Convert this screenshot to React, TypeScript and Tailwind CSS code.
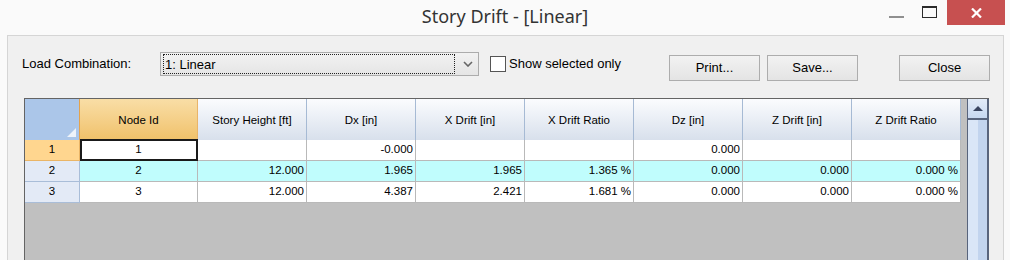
import React from "react";

const cols = [
  "Node Id",
  "Story Height [ft]",
  "Dx [in]",
  "X Drift [in]",
  "X Drift Ratio",
  "Dz [in]",
  "Z Drift [in]",
  "Z Drift Ratio",
];

const rows = [
  ["1", "", "-0.000", "", "", "0.000", "", ""],
  ["2", "12.000", "1.965", "1.965", "1.365 %", "0.000", "0.000", "0.000 %"],
  ["3", "12.000", "4.387", "2.421", "1.681 %", "0.000", "0.000", "0.000 %"],
];

function WinButton({ label }: { label: string }) {
  return (
    <div className="w-[91px] h-[26px] border border-[#adadad] bg-linear-to-b from-[#f2f2f2] to-[#e4e4e4] flex items-center justify-center text-[13px] text-black">
      {label}
    </div>
  );
}

export default function App() {
  return (
    <div className="w-[1010px] h-[260px] overflow-hidden bg-[#fafafa] flex flex-col font-['Liberation_Sans',Arial,sans-serif] text-black">
      {/* Title bar */}
      <div className="h-[35px] shrink-0 relative flex items-center justify-center">
        <span className="font-['Noto_Sans',sans-serif] text-[18px] text-[#333] -mt-[2px]">Story Drift - [Linear]</span>
        <div className="absolute right-[5px] top-0 flex items-start">
          <div className="w-[15px] h-[2px] bg-[#8f8f8f] mt-[16px] mr-[18px]" />
          <div className="w-[15px] h-[12px] border border-t-[2px] border-[#2b2b2b] mt-[6px] mr-[10px]" />
          <div className="w-[58px] h-[25px] bg-[#c75050] flex items-center justify-center">
            <svg width="11" height="10" viewBox="0 0 11 10">
              <path d="M1 0.5 L10 9.5 M10 0.5 L1 9.5" stroke="#fff" strokeWidth="2.2" />
            </svg>
          </div>
        </div>
      </div>

      {/* Client area */}
      <div className="ml-[7px] mr-[6px] h-[300px] shrink-0 border border-[#d5d5d5] bg-[#f0f0f0] flex flex-col">
        {/* Toolbar */}
        <div className="h-[62px] shrink-0 flex items-start pl-[14px] pr-[13px] text-[13px]">
          <div className="w-[138px] mt-[20px] leading-[15px]">Load Combination:</div>
          <div className="w-[319px] h-[24px] mt-[16px] border border-[#acacac] bg-linear-to-b from-[#f2f2f2] to-[#e5e5e5] flex items-center pl-[2px] pr-[5px]">
            <div className="w-[292px] h-[20px] border border-dotted border-[#222] flex items-center pl-[1px] leading-none">
              1: Linear
            </div>
            <div className="flex-1 flex justify-end">
              <svg width="10" height="6" viewBox="0 0 10 6">
                <path d="M1 1 L5 5 L9 1" stroke="#666" strokeWidth="1.6" fill="none" />
              </svg>
            </div>
          </div>
          <div className="ml-[11px] mt-[20px] w-[16px] h-[16px] border border-[#555] bg-white" />
          <div className="ml-[3px] mt-[20px] leading-[15px]">Show selected only</div>
          <div className="ml-auto mt-[19px] flex">
            <WinButton label="Print..." />
            <div className="w-[7px]" />
            <WinButton label="Save..." />
            <div className="w-[41px]" />
            <WinButton label="Close" />
          </div>
        </div>

        {/* Grid */}
        <div className="ml-[16px] w-[965px] h-[200px] shrink-0 border-l border-t border-[#646464] flex">
          <div className="flex-1 bg-[#c0c0c0]">
            <div className="grid grid-cols-[55px_118px_repeat(7,109px)] grid-rows-[41px_21px_21px_21px] text-[11.5px]">
              {/* Corner */}
              <div className="relative bg-[#abc6e9] border-r border-[#e3a24e]">
                <svg className="absolute right-[3px] bottom-[3px]" width="9" height="9" viewBox="0 0 9 9">
                  <path d="M9 0 L9 9 L0 9 Z" fill="#eef3fa" />
                </svg>
              </div>
              {cols.map((c, i) =>
                i === 0 ? (
                  <div
                    key={c}
                    className="border-r border-[#e8b46a] bg-linear-to-b from-[#f9dea6] to-[#f0c169] flex items-center justify-center pt-[2px]"
                  >
                    {c}
                  </div>
                ) : (
                  <div
                    key={c}
                    className="border-r border-[#a6bad4] bg-linear-to-b from-[#fbfcfe] to-[#d8e0ec] flex items-center justify-center pt-[2px]"
                  >
                    {c}
                  </div>
                )
              )}
              {rows.map((r, ri) => {
                const rowBg = ri === 1 ? "bg-[#c0fdfd]" : "bg-white";
                return (
                  <React.Fragment key={ri}>
                    <div
                      className={
                        ri === 0
                          ? "bg-[#ffd68f] border-r border-b border-[#eab566] flex items-center justify-center"
                          : "bg-[#e3eaf6] border-r border-b border-[#a9bdd8] flex items-center justify-center"
                      }
                    >
                      {ri + 1}
                    </div>
                    {r.map((v, ci) => (
                      <div
                        key={ci}
                        className={
                          rowBg +
                          " relative border-r border-b border-[#b9b9b9] flex items-center " +
                          (ci === 0 ? "justify-center" : "justify-end pr-[2px]")
                        }
                      >
                        {v}
                        {ri === 0 && ci === 0 && (
                          <div className="absolute left-0 -top-px -right-px -bottom-px border-2 border-[#1a1a1a]" />
                        )}
                      </div>
                    ))}
                  </React.Fragment>
                );
              })}
            </div>
          </div>
          {/* Scrollbar */}
          <div className="w-[22px] shrink-0 flex flex-col border-l border-r-2 border-[#58647c]">
            <div className="h-[21px] shrink-0 border-b-2 border-[#58647c] bg-linear-to-b from-[#e2ebf8] to-[#c7d8f0] flex items-center justify-center">
              <svg width="10" height="5" viewBox="0 0 10 5">
                <path d="M0 5 L5 0 L10 5 Z" fill="#3a4560" />
              </svg>
            </div>
            <div className="flex-1 flex">
              <div className="w-[10px] bg-[#dae6f7]" />
              <div className="flex-1 bg-[#c2d4ee]" />
            </div>
          </div>
        </div>
      </div>
    </div>
  );
}
